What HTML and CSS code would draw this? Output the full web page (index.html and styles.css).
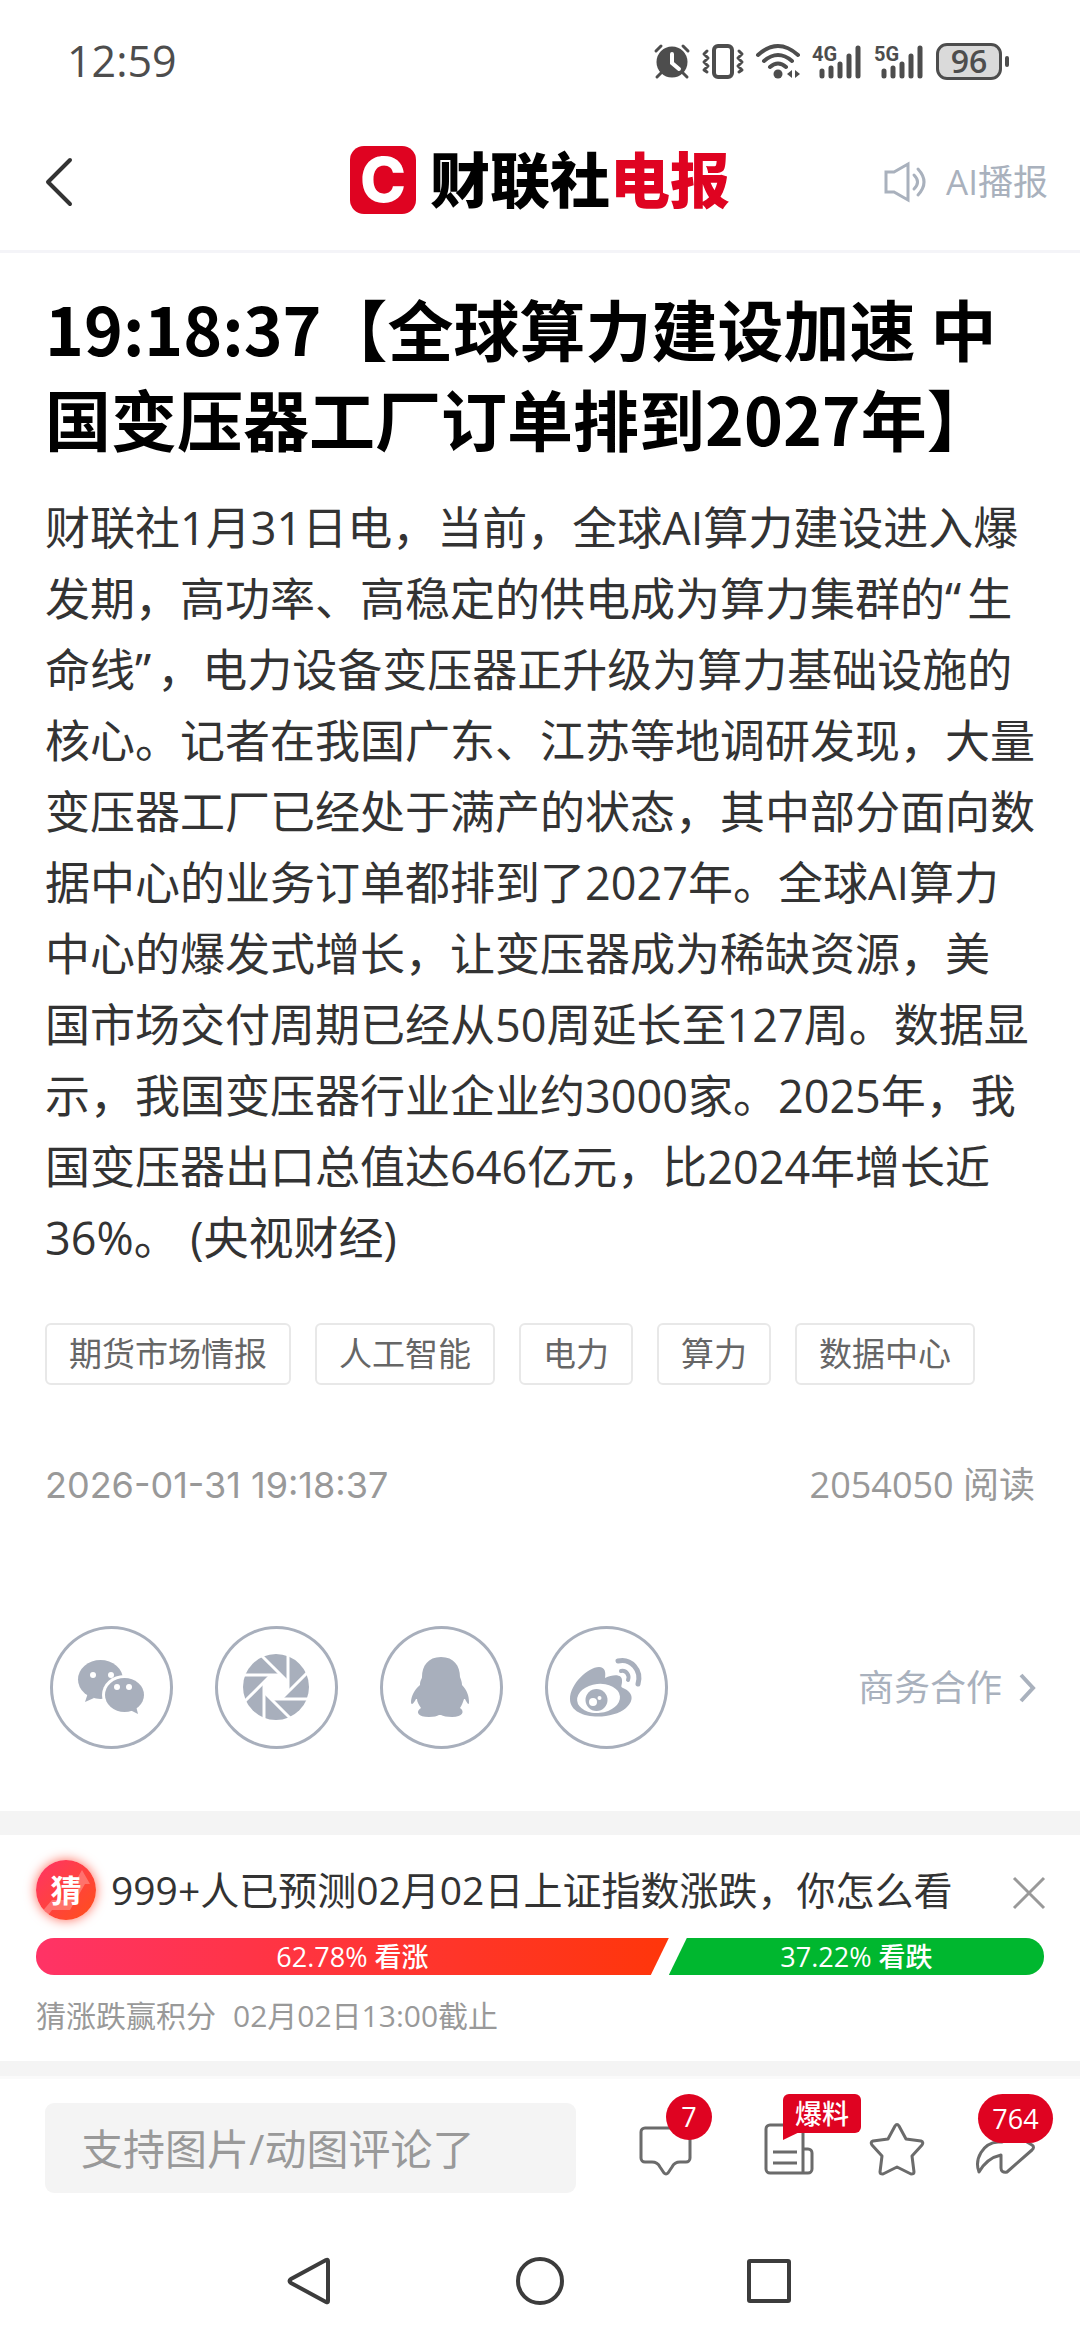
FILE: index.html
```html
<!DOCTYPE html>
<html lang="zh-CN">
<head>
<meta charset="utf-8">
<meta name="viewport" content="width=device-width, initial-scale=1">
<title>财联社电报</title>
<link rel="stylesheet" href="styles.css">
</head>
<body>
<div class="app">
  <div class="status">
    <span class="clock">12:59</span>
    <div class="status-icons">
      <svg width="36" height="36" viewBox="0 0 36 36" fill="none" stroke="#4d4d4d" stroke-width="3" stroke-linecap="round"><circle cx="18" cy="19" r="15.500" fill="#4d4d4d" stroke="none"/><path d="M2 8l5-5M34 8l-5-5M7 30l-4 4M29 30l4 4"/><path d="M18 11v9l7 6" stroke="#fff" stroke-width="4"/></svg>
      <svg width="42" height="36" viewBox="0 0 42 36" fill="none" stroke="#4d4d4d" stroke-width="3" stroke-linecap="round" stroke-linejoin="round"><rect x="12" y="3" width="18" height="31" rx="4" stroke-width="4"/><path d="M5 8l-3 3 4 4-4 4 4 4-4 4 3 2M37 8l3 3-4 4 4 4-4 4 4 4-3 2"/></svg>
      <svg width="44" height="36" viewBox="0 0 44 36" fill="none" stroke="#4d4d4d" stroke-width="4" stroke-linecap="round"><path d="M2 12q20-18 40 0M8 18q14-12 28 0M14 24q8-7 16 0"/><circle cx="22" cy="31" r="4.500" fill="#4d4d4d" stroke="none"/><path d="M36 27v8l-5-4zM39 27v8l5-4z" fill="#4d4d4d" stroke="none"/></svg>
      <svg width="50" height="36" viewBox="0 0 50 36"><text class="net" x="0" y="18">4G</text><path d="M10 28v5M19 25v8M28 21v12M37 13v20M46 5v28" stroke="#4d4d4d" stroke-width="5" stroke-linecap="round"/></svg>
      <svg width="50" height="36" viewBox="0 0 50 36"><text class="net" x="0" y="18">5G</text><path d="M10 28v5M19 25v8M28 21v12M37 13v20M46 5v28" stroke="#4d4d4d" stroke-width="5" stroke-linecap="round"/></svg>
      <div class="battery"><span class="battery-body">96</span><span class="battery-tip"></span></div>
    </div>
  </div>

  <header class="header">
    <button class="back" aria-label="返回"><svg width="28" height="50" viewBox="0 0 28 50" fill="none" stroke="#333" stroke-width="4" stroke-linecap="round" stroke-linejoin="round"><path d="M25 3L3 25l22 22"/></svg></button>
    <div class="brand"><span class="brand-mark">C</span><span class="brand-name">财联社<em>电报</em></span></div>
    <button class="listen"><svg width="44" height="42" viewBox="0 0 44 42" fill="none" stroke="#a9b1bd" stroke-width="3"><path d="M2 11h8L24 3v36L10 31H2z"/><path d="M30 14q7 7 0 14M34 8q12 13 0 26" stroke-linecap="round"/></svg>AI播报</button>
  </header>

  <main class="article">
    <h1 class="title">19:18:37【全球算力建设加速 中<br>国变压器工厂订单排到2027年】</h1>
    <p class="content">财联社1月31日电，当前，全球AI算力建设进入爆<br>发期，高功率、高稳定的供电成为算力集群的<span class="quote">“</span>生<br>命线<span class="quote">”</span>，电力设备变压器正升级为算力基础设施的<br>核心。记者在我国广东、江苏等地调研发现，大量<br>变压器工厂已经处于满产的状态，其中部分面向数<br>据中心的业务订单都排到了2027年。全球AI算力<br>中心的爆发式增长，让变压器成为稀缺资源，美<br>国市场交付周期已经从50周延长至127周。数据显<br>示，我国变压器行业企业约3000家。2025年，我<br>国变压器出口总值达646亿元，比2024年增长近<br>36%。 (央视财经)</p>
    <div class="tags">
      <a class="tag" href="#">期货市场情报</a><a class="tag" href="#">人工智能</a><a class="tag" href="#">电力</a><a class="tag" href="#">算力</a><a class="tag" href="#">数据中心</a>
    </div>
    <div class="meta"><time>2026-01-31 19:18:37</time><span>2054050 阅读</span></div>
    <div class="share">
      <button class="social" aria-label="微信"><svg width="123" height="123" viewBox="0 0 123 123" fill="#a8afbc"><path d="M38 67l-3 9 9-4z"/><ellipse cx="50.500" cy="53.500" rx="22.500" ry="19.500"/><g fill="#fff"><circle cx="43" cy="49" r="3"/><circle cx="61" cy="49" r="3"/><ellipse cx="74.500" cy="69" rx="22.500" ry="20"/></g><ellipse cx="74.500" cy="69" rx="19.500" ry="17"/><path d="M80 84l8 4-2-8z"/><g fill="#fff"><circle cx="67" cy="61" r="3"/><circle cx="79" cy="61" r="3"/></g></svg></button>
      <button class="social" aria-label="朋友圈"><svg width="123" height="123" viewBox="0 0 123 123"><circle cx="61" cy="61" r="33" fill="#a8afbc"/><path d="M73 56v10l-7 7H56l-7-7V56l7-7h10z" fill="#fff"/><g stroke="#fff" stroke-width="3"><path id="blade" d="M73 27v39"/><use href="#blade" transform="rotate(45 61 61)"/><use href="#blade" transform="rotate(90 61 61)"/><use href="#blade" transform="rotate(135 61 61)"/><use href="#blade" transform="rotate(180 61 61)"/><use href="#blade" transform="rotate(225 61 61)"/><use href="#blade" transform="rotate(270 61 61)"/><use href="#blade" transform="rotate(315 61 61)"/></g></svg></button>
      <button class="social" aria-label="QQ"><svg width="123" height="123" viewBox="0 0 123 123" fill="#a8afbc"><path d="M61 31c-13 0-19 9-19 20 0 2-2 3-2 8-6 5-9 12-9 17 0 3 2 3 5-3h1c0 3 2 6 4 9-6 4-3 9 8 9 5 0 8-1 10-2h2c2 1 6 2 11 2 11 0 13-6 8-9 2-3 3-6 4-9h1c3 6 4 6 4 3 0-6-2-12-7-17 0-3-1-5-2-8 0-11-6-20-19-20z"/></svg></button>
      <button class="social" aria-label="微博"><svg width="123" height="123" viewBox="0 0 123 123" fill="#a8afbc"><path d="M25 73c0-15 18-32 29-32 6 0 7 5 6 11 9-4 18-4 17 4 0 3-2 5 1 6 12 5 10 14 3 20-15 13-56 12-56-9z"/><ellipse cx="53.500" cy="72.500" rx="21.500" ry="14.500" fill="#fff" transform="rotate(-6 53 72)"/><circle cx="51.500" cy="74" r="11"/><circle cx="48" cy="76" r="4" fill="#fff"/><circle cx="54.500" cy="72" r="2" fill="#fff"/><path d="M73 35c13-3 24 9 20 23" fill="none" stroke="#a8afbc" stroke-width="5" stroke-linecap="round"/><path d="M76 45c5-1 9 4 7 9" fill="none" stroke="#a8afbc" stroke-width="4" stroke-linecap="round"/></svg></button>
      <a class="business" href="#">商务合作<svg width="15" height="28" viewBox="0 0 15 28" fill="none" stroke="#a9b1bd" stroke-width="4"><path d="M1 1l12 13L1 27"/></svg></a>
    </div>
  </main>

  <section class="poll">
    <div class="poll-head">
      <span class="poll-icon"><svg width="60" height="60" viewBox="0 0 60 60" fill="#fff" opacity=".25"><path d="M4 54l12-14h20l8-16h-6l8-14 8 14h-5L34 50H16l-6 8z"/></svg><b>猜</b></span>
      <span class="poll-title">999+人已预测02月02日上证指数涨跌，你怎么看</span>
      <button class="close" aria-label="关闭"><svg width="30" height="30" viewBox="0 0 30 30" stroke="#999" stroke-width="3"><path d="M0 0l30 30M30 0L0 30"/></svg></button>
    </div>
    <div class="bar">
      <button class="up" style="width:62.78%">62.78% 看涨</button>
      <button class="down">37.22% 看跌</button>
    </div>
    <p class="poll-note"><span>猜涨跌赢积分</span><span>02月02日13:00截止</span></p>
  </section>

  <footer class="toolbar">
    <input class="comment" type="text" aria-label="评论" placeholder="支持图片/动图评论了">
    <button class="action action-comment" aria-label="评论列表"><svg width="54" height="54" viewBox="0 0 54 54"><path d="M6 7h41a4 4 0 0 1 4 4v26a4 4 0 0 1-4 4h-6c-4 0-6 1-8 5l-4 6q-2 2-4 0l-4-6c-2-4-4-5-8-5H6a4 4 0 0 1-4-4V11a4 4 0 0 1 4-4z"/></svg><span class="badge badge-round">7</span></button>
    <button class="action" aria-label="爆料"><svg width="54" height="54" viewBox="0 0 54 54"><path d="M8 4h33v48H8a4 4 0 0 1-4-4V8a4 4 0 0 1 4-4zM41 28h5a4 4 0 0 1 4 4v16a4 4 0 0 1-4 4h-5M11 31h24M11 42h24"/></svg><span class="badge badge-tip">爆料</span></button>
    <button class="action" aria-label="收藏"><svg width="54" height="54" viewBox="0 0 54 54"><path d="M25 5q2-3 4 0l7 13 15 2q3 1 1 4L42 35l2 16q0 2-3 2l-14-7-14 7q-3 0-3-2l2-16L2 24q-2-3 1-4l15-2z"/></svg></button>
    <button class="action" aria-label="分享"><svg width="54" height="54" viewBox="0 0 54 54"><path d="M1 51C-4 38 5 22 20 21h4V10q0-3 3-2l27 16q3 2 0 5L29 51q-6 1-6-4V34Q9 37 1 51z"/></svg><span class="badge badge-pill">764</span></button>
  </footer>

  <nav class="sysnav">
    <button aria-label="后退"><svg width="48" height="48" viewBox="0 0 48 48"><path d="M42 4v40q0 2-2 1L5 26q-3-2 0-4L40 3q2-1 2 1z"/></svg></button>
    <button aria-label="主页"><svg width="48" height="48" viewBox="0 0 48 48"><circle cx="24" cy="24" r="22"/></svg></button>
    <button aria-label="最近任务"><svg width="48" height="48" viewBox="0 0 48 48"><rect x="3" y="4" width="40" height="40" rx="1"/></svg></button>
  </nav>
</div>
</body>
</html>
```
FILE: styles.css
```css
* { box-sizing: border-box; }
body {
  margin: 0;
  background: #fff;
  color: #333;
  font-family: "Open Sans", "Noto Sans CJK SC", sans-serif;
}
button {
  border: 0;
  padding: 0;
  background: none;
  color: inherit;
  font: inherit;
}
a { color: inherit; text-decoration: none; }
svg { display: block; flex: none; overflow: visible; }
h1, p { margin: 0; }

.app { display: flex; flex-direction: column; min-height: 100vh; }

/* Status bar */
.status {
  display: flex;
  justify-content: space-between;
  align-items: center;
  height: 122px;
  padding: 0 71px 0 67px;
  color: #4d4d4d;
}
.clock { font-size: 43px; font-weight: 500; line-height: 60px; }
.status-icons { display: flex; align-items: center; gap: 12px; }
.net { font: 700 20px Roboto, sans-serif; fill: #4d4d4d; }
.battery { display: flex; align-items: center; gap: 3px; }
.battery-body {
  width: 66px;
  height: 37px;
  border: 3px solid #4d4d4d;
  border-radius: 11px;
  background: #dadada;
  font-size: 32px;
  font-weight: 600;
  line-height: 30px;
  text-align: center;
}
.battery-tip { width: 4px; height: 11px; border-radius: 2px; background: #4d4d4d; }

/* Header */
.header {
  display: grid;
  grid-template-columns: 1fr auto 1fr;
  align-items: center;
  height: 131px;
  padding: 0 32px 12px;
  border-bottom: 3px solid #f4f4f8;
}
.back { justify-self: start; padding: 4px 0 0 13px; }
.brand { display: flex; align-items: center; gap: 14px; }
.brand-mark {
  width: 66px;
  height: 68px;
  border-radius: 14px;
  background: #df0321;
  color: #fff;
  font: 800 62px/68px Inter, sans-serif;
  text-align: center;
}
.brand-name { color: #000; font-size: 60px; font-weight: 900; line-height: 68px; }
.brand-name em { color: #df0321; font-style: normal; }
.listen {
  display: flex;
  justify-self: end;
  align-items: center;
  gap: 18px;
  padding-top: 4px;
  color: #a9b1bd;
  font-size: 35px;
  line-height: 50px;
}

/* Article */
.article { padding: 29px 45px 62px; }
.title {
  color: #000;
  font-family: "Noto Sans CJK SC", sans-serif;
  font-size: 66px;
  font-weight: 700;
  line-height: 90px;
  white-space: nowrap;
}
.content { margin-top: 30px; font-size: 45px; line-height: 71px; white-space: nowrap; }
.quote { padding-right: 6px; font-family: "Noto Sans", sans-serif; line-height: 1; }
.tags { display: flex; flex-wrap: wrap; gap: 24px; margin-top: 50px; }
.tag {
  padding: 0 22px;
  border: 2px solid #e8e8e8;
  border-radius: 6px;
  color: #666;
  font-size: 33px;
  line-height: 58px;
}
.meta {
  display: flex;
  justify-content: space-between;
  margin-top: 75px;
  color: #999;
  font-size: 36px;
  line-height: 50px;
}
.meta time { font-family: Inter, sans-serif; }
.share { display: flex; align-items: center; gap: 42px; margin-top: 116px; padding-left: 5px; }
.social { width: 123px; height: 123px; border-radius: 50%; box-shadow: inset 0 0 0 3px #a8afbc; }
.business {
  display: flex;
  align-items: center;
  gap: 18px;
  margin-left: auto;
  color: #a9b1bd;
  font-size: 36px;
  line-height: 50px;
}

/* Prediction card */
.poll {
  padding: 25px 36px 23px;
  border-top: 24px solid #f4f4f4;
  border-bottom: 15px solid #f4f4f4;
}
.poll-head { display: flex; align-items: center; }
.poll-icon {
  display: grid;
  place-items: center;
  width: 60px;
  height: 60px;
  border-radius: 50%;
  background: linear-gradient(135deg, #ff3366, #ff5019);
  box-shadow: 0 0 12px #ff6a5a;
  color: #fff;
  font-size: 31px;
  line-height: 60px;
}
.poll-icon > * { grid-area: 1 / 1; }
.poll-icon svg { clip-path: circle(50%); }
.poll-title { margin-left: 15px; font-size: 39px; line-height: 60px; white-space: nowrap; }
.close { margin-left: auto; padding-top: 6px; }
.bar {
  display: flex;
  height: 37px;
  margin-top: 18px;
  border-radius: 18px;
  overflow: hidden;
  color: #fff;
  font-size: 27px;
  font-weight: 500;
  line-height: 36px;
}
.up {
  background: linear-gradient(90deg, #ff3366, #ff360a);
  clip-path: polygon(0 0, 100% 0, calc(100% - 18px) 100%, 0 100%);
}
.down {
  flex: 1;
  background: #00b72f;
  clip-path: polygon(18px 0, 100% 0, 100% 100%, 0 100%);
}
.poll-note { display: flex; gap: 17px; margin-top: 18px; color: #999; font-size: 30px; line-height: 45px; }

/* Comment toolbar */
.toolbar {
  display: flex;
  align-items: center;
  gap: 54px;
  padding: 24px 48px 24px 45px;
  border-top: 3px solid #fafafa;
}
.comment {
  flex: 1;
  min-width: 0;
  height: 90px;
  margin-right: 9px;
  padding: 0 36px;
  border: 0;
  border-radius: 9px;
  background: #f4f4f4;
  font: inherit;
  font-size: 42px;
}
.comment::placeholder { color: #999; opacity: 1; }
.action { position: relative; width: 54px; height: 54px; }
.action svg { fill: none; stroke: #6b6b6b; stroke-width: 3; stroke-linejoin: round; }
.action-comment { margin-right: 15px; }
.badge { position: absolute; top: -27px; background: #df0321; color: #fff; font-size: 27px; text-align: center; }
.badge-round { left: 27px; width: 46px; border-radius: 23px; line-height: 46px; }
.badge-tip { left: 21px; width: 78px; border-radius: 6px; font-weight: 500; line-height: 39px; }
.badge-tip::after {
  content: "";
  position: absolute;
  top: 33px;
  left: 0;
  width: 15px;
  height: 13px;
  background: #df0321;
  clip-path: polygon(0 0, 100% 0, 100% 45%, 0 100%);
}
.badge-pill { left: 0; width: 75px; border-radius: 25px; line-height: 49px; }

/* System navigation */
.sysnav { display: grid; grid-template-columns: repeat(3, 1fr); justify-items: center; padding: 40px 18% 34px; }
.sysnav svg { fill: none; stroke: #3c3c3c; stroke-width: 4; }
```
